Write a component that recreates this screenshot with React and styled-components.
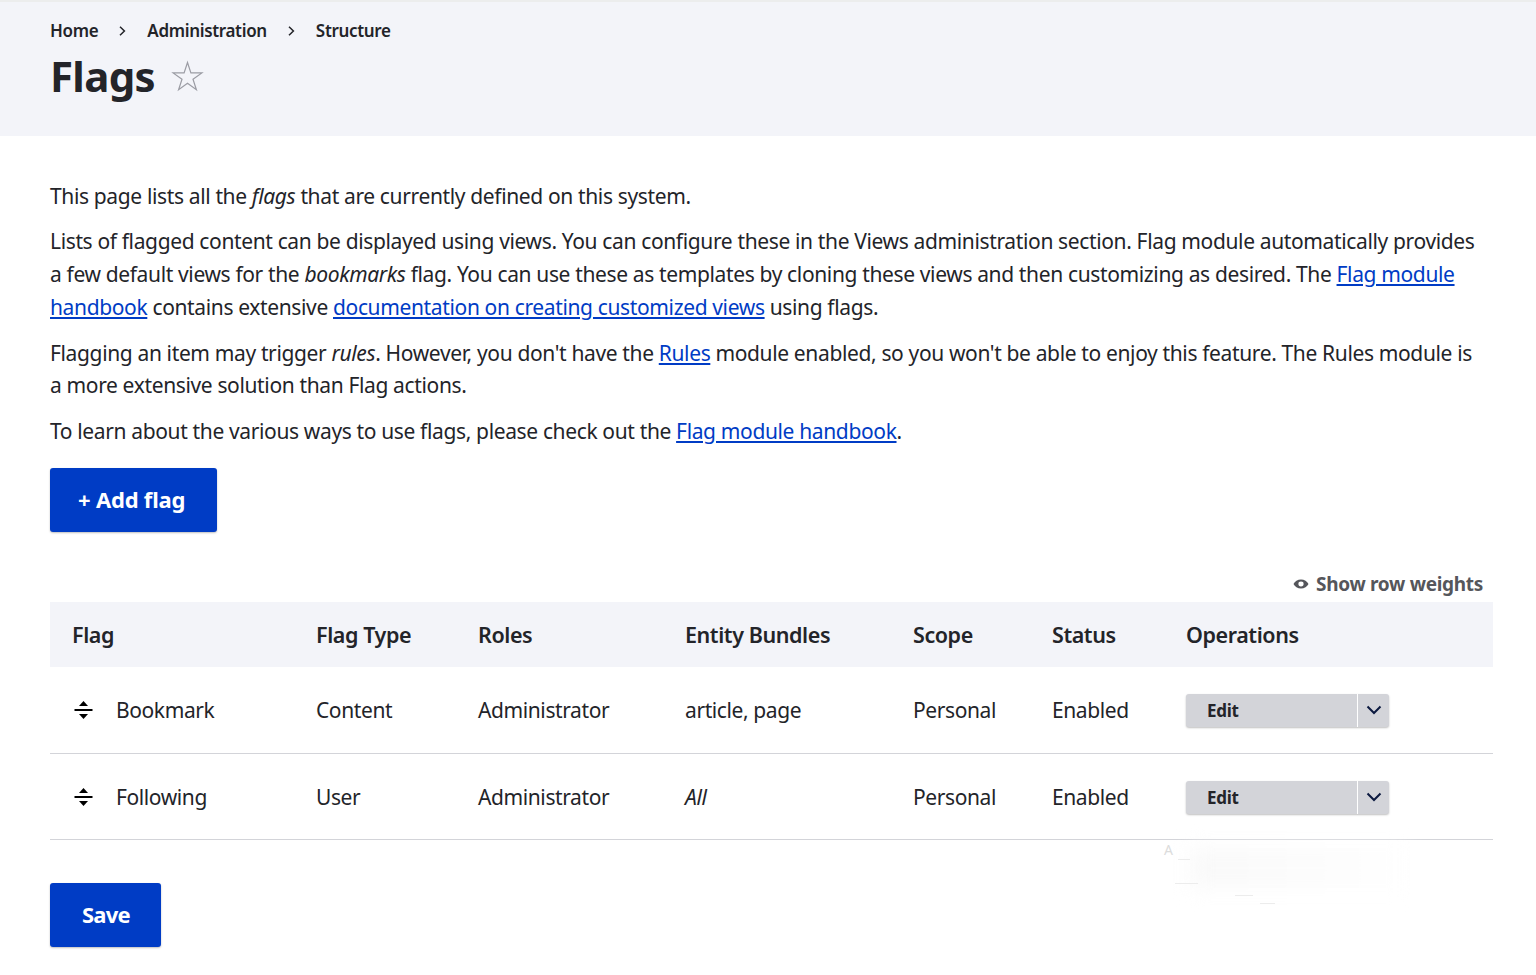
import React from "react"
import styled, { createGlobalStyle } from "styled-components"

const GlobalStyle = createGlobalStyle`
  html, body {
    margin: 0;
    padding: 0;
    background: #fff;
    overflow: hidden;
  }
  body {
    font-family: "Noto Sans", "Open Sans", sans-serif;
    color: #232429;
  }
`

const Page = styled.div`
  position: relative;
  width: 1536px;
  height: 975px;
  overflow: hidden;
`

const Header = styled.header`
  height: 136px;
  box-sizing: border-box;
  background: #f3f4f9;
  border-top: 2px solid #eceded;
  padding: 18px 50px 0;
`

const Breadcrumb = styled.nav`
  display: flex;
  align-items: center;
  height: 22px;
  font-size: 17px;
  font-weight: 600;
  letter-spacing: -0.33px;
  color: #232429;
`

const Crumb = styled.span`
  line-height: 22px;
`

const CrumbSep = styled.svg`
  width: 7px;
  height: 10px;
  margin: 0 21px;
  fill: none;
  stroke: #232429;
  stroke-width: 1.5;
`

const TitleRow = styled.div`
  display: flex;
  align-items: center;
  margin-top: 10px;
  height: 48px;
`

const Title = styled.h1`
  margin: 0;
  font-size: 42px;
  line-height: 48px;
  font-weight: 700;
  letter-spacing: -0.7px;
`

const Star = styled.svg`
  width: 33px;
  height: 33px;
  margin-left: 16px;
  fill: none;
  stroke: #9b9ca4;
  stroke-width: 1.2;
`

const Main = styled.main`
  padding: 44px 43px 0 50px;
`

const Para = styled.p`
  max-width: 1436px;
  margin: 0 0 12.7px;
  font-size: 21px;
  line-height: 32.8px;
  letter-spacing: -0.36px;
  color: #232429;
`

const Link = styled.a`
  color: #003cc5;
  text-decoration: underline;
`

const Button = styled.button`
  display: block;
  height: 64px;
  padding: 0 ${props => props.$padRight}px 2px ${props => props.$padLeft}px;
  border: none;
  border-radius: 3px;
  background: #003cc5;
  color: #fff;
  font-family: inherit;
  font-size: 22px;
  font-weight: 700;
  letter-spacing: ${props => props.$spacing}px;
  box-shadow: 0 1px 2px rgba(0, 0, 0, 0.25);
`

const AddWrap = styled.div`
  margin-top: 20px;
`

const WeightsRow = styled.div`
  display: flex;
  justify-content: flex-end;
  align-items: center;
  height: 24px;
  margin-top: 40px;
  padding-right: 10px;
  font-size: 19px;
  font-weight: 700;
  letter-spacing: -0.3px;
  color: #55565b;
`

const EyeIcon = styled.svg`
  width: 16px;
  height: 10px;
  margin-right: 7px;
`

const Table = styled.table`
  width: 100%;
  margin-top: 6px;
  border-collapse: collapse;
  table-layout: fixed;
`

const HeadRow = styled.tr`
  height: 65px;
  background: #f3f4f9;
`

const Th = styled.th`
  padding: 0 0 0 22px;
  text-align: left;
  font-size: 21.5px;
  font-weight: 600;
  letter-spacing: -0.42px;
  color: #232429;
`

const Row = styled.tr`
  height: 86px;
  border-bottom: 1px solid #d3d4d9;

  &:first-child {
    height: 87px;
  }
`

const Td = styled.td`
  padding: 0 0 0 22px;
  font-size: 21px;
  letter-spacing: -0.4px;
  color: #232429;
  font-style: ${props => (props.$italic ? "italic" : "normal")};
`

const FlagCell = styled.div`
  display: flex;
  align-items: center;
`

const Handle = styled.svg`
  width: 19px;
  height: 20px;
  margin: 0 23px 0 2px;
`

const Dropbutton = styled.div`
  display: flex;
  width: 203px;
  height: 33px;
  margin-top: 1px;
  border-radius: 3px;
  overflow: hidden;
  background: #d3d4d9;
  box-shadow: 0 1px 2px rgba(0, 0, 0, 0.25);
`

const DropMain = styled.span`
  flex: 1;
  padding-left: 21px;
  line-height: 33px;
  font-size: 17px;
  font-weight: 700;
  letter-spacing: -0.3px;
  color: #232429;
  border-right: 1px solid #fff;
`

const DropToggle = styled.span`
  display: flex;
  align-items: center;
  justify-content: center;
  width: 31px;
`

const Chevron = styled.svg`
  width: 16px;
  height: 10px;
  fill: none;
  stroke: #0c1a40;
  stroke-width: 2;
`

const SaveWrap = styled.div`
  margin-top: 43px;
`

/* leftovers of a faint watermark sitting over the page */
const Smudge = styled.div`
  position: absolute;
  left: 1190px;
  top: 848px;
  width: 220px;
  height: 40px;
  background: linear-gradient(90deg, #f9f9f9, #fdfdfd 70%, #fff);
  filter: blur(10px);
`

const SmudgeLetter = styled.span`
  position: absolute;
  left: 1164px;
  top: 840px;
  font-size: 14px;
  color: #dcdcdc;
`

const SmudgeLine = styled.i`
  position: absolute;
  left: ${props => props.$x}px;
  top: ${props => props.$y}px;
  width: ${props => props.$w}px;
  height: 1px;
  background: #ececec;
`

const rows = [
  { name: "Bookmark", type: "Content", bundles: "article, page" },
  { name: "Following", type: "User", bundles: "All", italic: true },
]

const columns = [244, 162, 207, 228, 139, 134, 329]

const smudgeLines = [
  { x: 1178, y: 859, w: 12 },
  { x: 1175, y: 883, w: 23 },
  { x: 1235, y: 895, w: 18 },
  { x: 1260, y: 903, w: 15 },
]

const App = () => (
  <Page>
    <GlobalStyle />
    <Header>
      <Breadcrumb>
        <Crumb>Home</Crumb>
        <CrumbSep viewBox="0 0 7 10">
          <path d="M1 .8 5.4 5 1 9.2" />
        </CrumbSep>
        <Crumb>Administration</Crumb>
        <CrumbSep viewBox="0 0 7 10">
          <path d="M1 .8 5.4 5 1 9.2" />
        </CrumbSep>
        <Crumb>Structure</Crumb>
      </Breadcrumb>
      <TitleRow>
        <Title>Flags</Title>
        <Star viewBox="0 0 33 33">
          <path d="M16.5 2.5 19.9 12.9H30.9L22 19.3 25.4 29.7 16.5 23.3 7.6 29.7 11 19.3 2.1 12.9H13.1Z" />
        </Star>
      </TitleRow>
    </Header>
    <Main>
      <Para>
        This page lists all the <em>flags</em> that are currently defined on
        this system.
      </Para>
      <Para>
        Lists of flagged content can be displayed using views. You can configure
        these in the Views administration section. Flag module automatically
        provides a few default views for the <em>bookmarks</em> flag. You can
        use these as templates by cloning these views and then customizing as
        desired. The <Link href="#">Flag module handbook</Link> contains
        extensive <Link href="#">documentation on creating customized views</Link>{" "}
        using flags.
      </Para>
      <Para>
        Flagging an item may trigger <em>rules</em>. However, you don't have the{" "}
        <Link href="#">Rules</Link> module enabled, so you won't be able to
        enjoy this feature. The Rules module is a more extensive solution than
        Flag actions.
      </Para>
      <Para>
        To learn about the various ways to use flags, please check out the{" "}
        <Link href="#">Flag module handbook</Link>.
      </Para>
      <AddWrap>
        <Button $padLeft={28} $padRight={32} $spacing={-0.2}>
          + Add flag
        </Button>
      </AddWrap>
      <WeightsRow>
        <EyeIcon viewBox="0 0 16 10">
          <path
            fillRule="evenodd"
            fill="#55565b"
            d="M8 .5C4.600.5 1.800 2.300.5 5c1.300 2.700 4.100 4.500 7.500 4.500s6.200-1.800 7.500-4.500C14.200 2.300 11.400.5 8 .5Zm0 2.100a2.600 2.400 0 1 1 0 4.800 2.600 2.400 0 0 1 0-4.800Z"
          />
        </EyeIcon>
        Show row weights
      </WeightsRow>
      <Table>
        <colgroup>
          {columns.map((w, i) => (
            <col key={i} width={w} />
          ))}
        </colgroup>
        <thead>
          <HeadRow>
            <Th>Flag</Th>
            <Th>Flag Type</Th>
            <Th>Roles</Th>
            <Th>Entity Bundles</Th>
            <Th>Scope</Th>
            <Th>Status</Th>
            <Th>Operations</Th>
          </HeadRow>
        </thead>
        <tbody>
          {rows.map(row => (
            <Row key={row.name}>
              <Td>
                <FlagCell>
                  <Handle viewBox="0 0 19 20">
                    <path d="M9.500 1 14 6H5Z" fill="#000" />
                    <rect x="0.500" y="9" width="18" height="2" fill="#000" />
                    <path d="M9.500 19 14 14H5Z" fill="#000" />
                  </Handle>
                  {row.name}
                </FlagCell>
              </Td>
              <Td>{row.type}</Td>
              <Td>Administrator</Td>
              <Td $italic={row.italic}>{row.bundles}</Td>
              <Td>Personal</Td>
              <Td>Enabled</Td>
              <Td>
                <Dropbutton>
                  <DropMain>Edit</DropMain>
                  <DropToggle>
                    <Chevron viewBox="0 0 16 10">
                      <path d="M1.500 1.500 8 8l6.500-6.500" />
                    </Chevron>
                  </DropToggle>
                </Dropbutton>
              </Td>
            </Row>
          ))}
        </tbody>
      </Table>
      <SaveWrap>
        <Button $padLeft={32} $padRight={31} $spacing={-0.8}>
          Save
        </Button>
      </SaveWrap>
    </Main>
    <Smudge />
    <SmudgeLetter>A</SmudgeLetter>
    {smudgeLines.map(line => (
      <SmudgeLine key={line.x} $x={line.x} $y={line.y} $w={line.w} />
    ))}
  </Page>
)

export default App
